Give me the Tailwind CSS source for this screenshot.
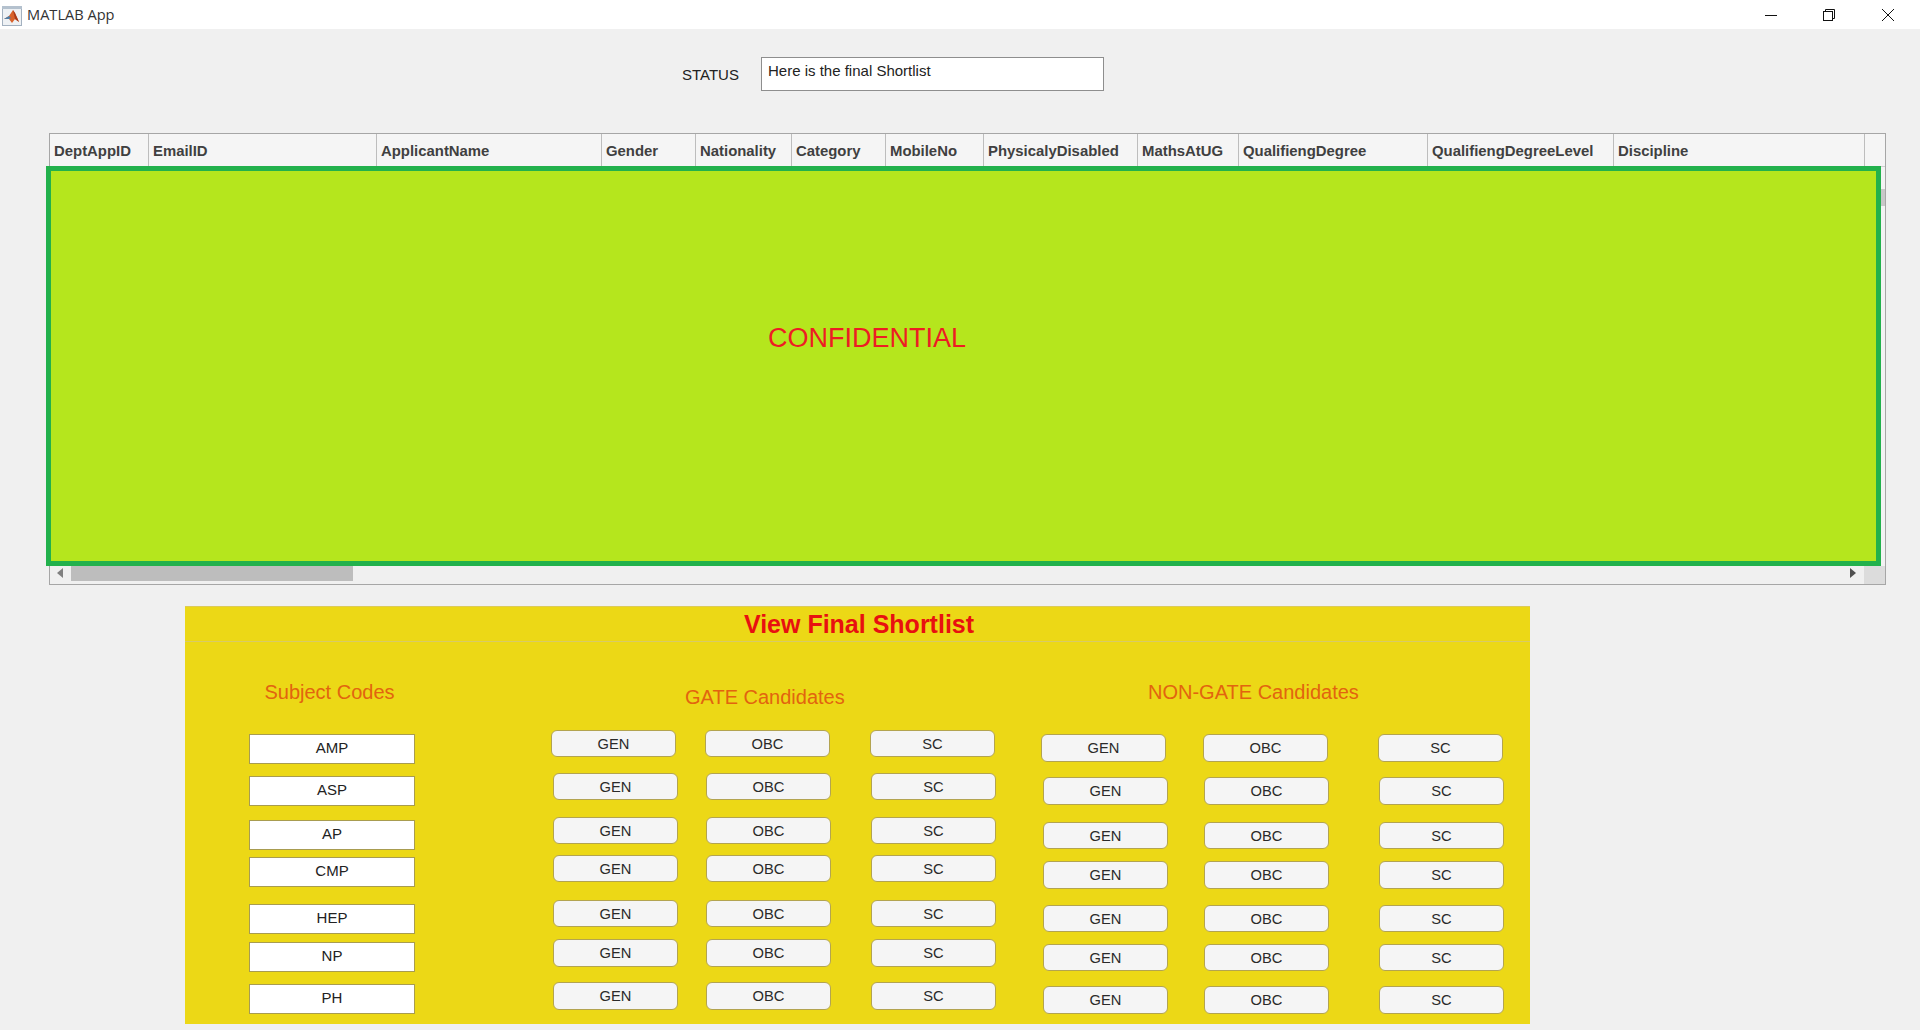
<!DOCTYPE html>
<html lang="en">
<head>
  <meta charset="UTF-8" />
  <title>MATLAB App</title>
  <script src="https://cdn.jsdelivr.net/npm/@tailwindcss/browser@4"></script>
</head>
<body class="bg-[#f0f0f0] h-[1030px] overflow-hidden font-['Liberation_Sans',Arial,sans-serif]">

  <!-- Title bar -->
  <header class="h-[29px] bg-white flex items-center">
    <svg class="ml-[2px] mt-[2px] w-[20px] h-[20px]" viewBox="0 0 20 20">
      <rect x="0.5" y="0.5" width="19" height="19" fill="#eef1f4" stroke="#a3b1c0"/>
      <rect x="0" y="0" width="20" height="3" fill="#b4c1ce"/>
      <path d="M2 13 L7 10 L11 4 L13 7 L17 16 L13 13 L10 17 L7 13 Z" fill="#d9622b"/>
      <path d="M2 13 L7 10 L9 12 L7 13 Z" fill="#4f7fa8"/>
      <path d="M11 4 L13 7 L17 16 L13 13 Z" fill="#a83a1a"/>
    </svg>
    <span class="ml-[5px] text-[14.6px] text-[#333] font-['Open_Sans',sans-serif]">MATLAB App</span>
    <div class="ml-auto mr-[3px] flex">
      <div class="w-[58px] h-[29px] flex items-center justify-center">
        <svg class="w-[12px] h-[12px]" viewBox="0 0 12 12"><path d="M0 6.5 H12" stroke="#111" stroke-width="1"/></svg>
      </div>
      <div class="w-[58px] mr-[1px] h-[29px] flex items-center justify-center">
        <svg class="w-[12px] h-[12px]" viewBox="0 0 12 12" fill="none" stroke="#111"><rect x="0.5" y="2.5" width="9" height="9"/><path d="M2.5 2.5 V0.5 H11.5 V9.5 H9.5"/></svg>
      </div>
      <div class="w-[58px] h-[29px] flex items-center justify-center">
        <svg class="w-[12px] h-[12px]" viewBox="0 0 12 12" stroke="#111"><path d="M0 0 L12 12 M12 0 L0 12"/></svg>
      </div>
    </div>
  </header>

  <!-- Status -->
  <div class="flex items-start pl-[682px] pt-[28px]">
    <span class="mt-[9px] w-[57px] text-[15px] leading-[18px] text-[#222] whitespace-nowrap">STATUS</span>
    <div class="ml-[22px] w-[343px] h-[34px] bg-white border border-[#8e8e8e] pl-[6px] pt-[4px] text-[15px] leading-[18px] text-[#222]">Here is the final Shortlist</div>
  </div>

  <!-- Table -->
  <section class="relative mt-[42px] ml-[49px] w-[1837px] h-[452px] border border-[#a6a6a6] bg-[#f0f0f0] flex flex-col">
    <div class="h-[32px] flex bg-[#f5f5f5] text-[14.9px] font-bold text-[#404040]">
      <div class="w-[99px] h-full pl-[4px] pt-[8px] leading-[18px] border-r border-[#bdbdbd]">DeptAppID</div>
      <div class="w-[228px] h-full pl-[4px] pt-[8px] leading-[18px] border-r border-[#bdbdbd]">EmailID</div>
      <div class="w-[225px] h-full pl-[4px] pt-[8px] leading-[18px] border-r border-[#bdbdbd]">ApplicantName</div>
      <div class="w-[94px] h-full pl-[4px] pt-[8px] leading-[18px] border-r border-[#bdbdbd]">Gender</div>
      <div class="w-[96px] h-full pl-[4px] pt-[8px] leading-[18px] border-r border-[#bdbdbd]">Nationality</div>
      <div class="w-[94px] h-full pl-[4px] pt-[8px] leading-[18px] border-r border-[#bdbdbd]">Category</div>
      <div class="w-[98px] h-full pl-[4px] pt-[8px] leading-[18px] border-r border-[#bdbdbd]">MobileNo</div>
      <div class="w-[154px] h-full pl-[4px] pt-[8px] leading-[18px] border-r border-[#bdbdbd]">PhysicalyDisabled</div>
      <div class="w-[101px] h-full pl-[4px] pt-[8px] leading-[18px] border-r border-[#bdbdbd]">MathsAtUG</div>
      <div class="w-[189px] h-full pl-[4px] pt-[8px] leading-[18px] border-r border-[#bdbdbd]">QualifiengDegree</div>
      <div class="w-[186px] h-full pl-[4px] pt-[8px] leading-[18px] border-r border-[#bdbdbd]">QualifiengDegreeLevel</div>
      <div class="w-[251px] h-full pl-[4px] pt-[8px] leading-[18px] border-r border-[#bdbdbd]">Discipline</div>
    </div>
    <div class="h-[400px] flex justify-end">
      <div class="w-[4px] h-full bg-[#f3f3f3] border-t border-[#cfcfcf]">
        <div class="mt-[22px] h-[17px] bg-[#c8c8c8]"></div>
      </div>
    </div>
    <!-- Horizontal scrollbar -->
    <div class="h-[18px] flex items-start">
      <svg class="ml-[7px] mt-[2px] w-[6px] h-[10px]" viewBox="0 0 6 10"><path d="M6 0 V10 L0 5 Z" fill="#808080"/></svg>
      <div class="ml-[8px] w-[282px] h-[15px] bg-[#bdbdbd]"></div>
      <svg class="ml-auto mt-[2px] w-[6px] h-[10px]" viewBox="0 0 6 10"><path d="M0 0 V10 L6 5 Z" fill="#505050"/></svg>
      <div class="ml-[8px] w-[21px] h-[18px] bg-[#dcdcdc]"></div>
    </div>
    <!-- Redaction block painted over the table rows -->
    <div class="absolute left-[-4px] top-[32px] w-[1835px] h-[400px] bg-[#b5e61d] border-[5px] border-[#22b14c] pl-[717px] pt-[151px]">
      <span class="block text-[27px] leading-[32px] text-[#ed1c24]">CONFIDENTIAL</span>
    </div>
  </section>

  <!-- Shortlist panel -->
  <section class="mt-[21px] ml-[185px] w-[1345px] h-[418px] bg-[#ecd816] border-t border-[#dcca58]">
    <h1 class="h-[34px] border-b border-[#d8ca66] text-center text-[25px] leading-[34px] font-bold text-[#e81010] pl-[3px] box-content">View Final Shortlist</h1>
    <div class="flex items-start">

      <div class="ml-[64px] w-[166px]">
        <div class="mt-[38px] -ml-[5px] h-[24px] text-[20px] leading-[24px] text-[#e2640f] whitespace-nowrap text-center">Subject Codes</div>
        <div class="mt-[30px] h-[30px] bg-white border border-[#a89c50] text-center text-[15px] leading-[26px] text-[#222]">AMP</div>
        <div class="mt-[12px] h-[30px] bg-white border border-[#a89c50] text-center text-[15px] leading-[26px] text-[#222]">ASP</div>
        <div class="mt-[14px] h-[30px] bg-white border border-[#a89c50] text-center text-[15px] leading-[26px] text-[#222]">AP</div>
        <div class="mt-[7px] h-[30px] bg-white border border-[#a89c50] text-center text-[15px] leading-[26px] text-[#222]">CMP</div>
        <div class="mt-[17px] h-[30px] bg-white border border-[#a89c50] text-center text-[15px] leading-[26px] text-[#222]">HEP</div>
        <div class="mt-[8px] h-[30px] bg-white border border-[#a89c50] text-center text-[15px] leading-[26px] text-[#222]">NP</div>
        <div class="mt-[12px] h-[30px] bg-white border border-[#a89c50] text-center text-[15px] leading-[26px] text-[#222]">PH</div>
      </div>

      <div id="gate" class="ml-[136px] w-[445px]">
        <div class="mt-[43px] ml-[134px] h-[24px] text-[20px] leading-[24px] text-[#e2640f] whitespace-nowrap">GATE Candidates</div>
      </div>

      <div id="nongate" class="ml-[45px] w-[470px]">
        <div class="mt-[38px] ml-[107px] h-[24px] text-[20px] leading-[24px] text-[#e2640f] whitespace-nowrap">NON-GATE Candidates</div>
      </div>
    </div>
  </section>

<script>
  const btn = 'w-[125px] shrink-0 bg-[#f5f5f5] border border-[#b3a450] rounded-[6px] text-center text-[14.7px] pt-[1px] text-[#2a2a2a] flex items-center justify-center';

  // each row: [margin top, height, left offset, gap to OBC, gap to SC]
  const gateRows = [
    ['mt-[21px]', 'h-[27px]', 'ml-0', 'ml-[29px]', 'ml-[40px]'],
    ['mt-[16px]', 'h-[27px]', 'ml-[2px]', 'ml-[28px]', 'ml-[40px]'],
    ['mt-[17px]', 'h-[27px]', 'ml-[2px]', 'ml-[28px]', 'ml-[40px]'],
    ['mt-[11px]', 'h-[27px]', 'ml-[2px]', 'ml-[28px]', 'ml-[40px]'],
    ['mt-[18px]', 'h-[27px]', 'ml-[2px]', 'ml-[28px]', 'ml-[40px]'],
    ['mt-[12px]', 'h-[28px]', 'ml-[2px]', 'ml-[28px]', 'ml-[40px]'],
    ['mt-[15px]', 'h-[28px]', 'ml-[2px]', 'ml-[28px]', 'ml-[40px]'],
  ];
  const nonGateRows = [
    ['mt-[30px]', 'h-[28px]', 'ml-0', 'ml-[37px]', 'ml-[50px]'],
    ['mt-[15px]', 'h-[28px]', 'ml-[2px]', 'ml-[36px]', 'ml-[50px]'],
    ['mt-[17px]', 'h-[27px]', 'ml-[2px]', 'ml-[36px]', 'ml-[50px]'],
    ['mt-[12px]', 'h-[28px]', 'ml-[2px]', 'ml-[36px]', 'ml-[50px]'],
    ['mt-[16px]', 'h-[27px]', 'ml-[2px]', 'ml-[36px]', 'ml-[50px]'],
    ['mt-[12px]', 'h-[27px]', 'ml-[2px]', 'ml-[36px]', 'ml-[50px]'],
    ['mt-[15px]', 'h-[28px]', 'ml-[2px]', 'ml-[36px]', 'ml-[50px]'],
  ];

  function addRows(id, rows) {
    const col = document.getElementById(id);
    rows.forEach(r => {
      col.insertAdjacentHTML('beforeend', `
        <div class="flex ${r[0]} ${r[1]}">
          <button class="${btn} ${r[2]}">GEN</button>
          <button class="${btn} ${r[3]}">OBC</button>
          <button class="${btn} ${r[4]}">SC</button>
        </div>`);
    });
  }
  addRows('gate', gateRows);
  addRows('nongate', nonGateRows);
</script>
</body>
</html>
